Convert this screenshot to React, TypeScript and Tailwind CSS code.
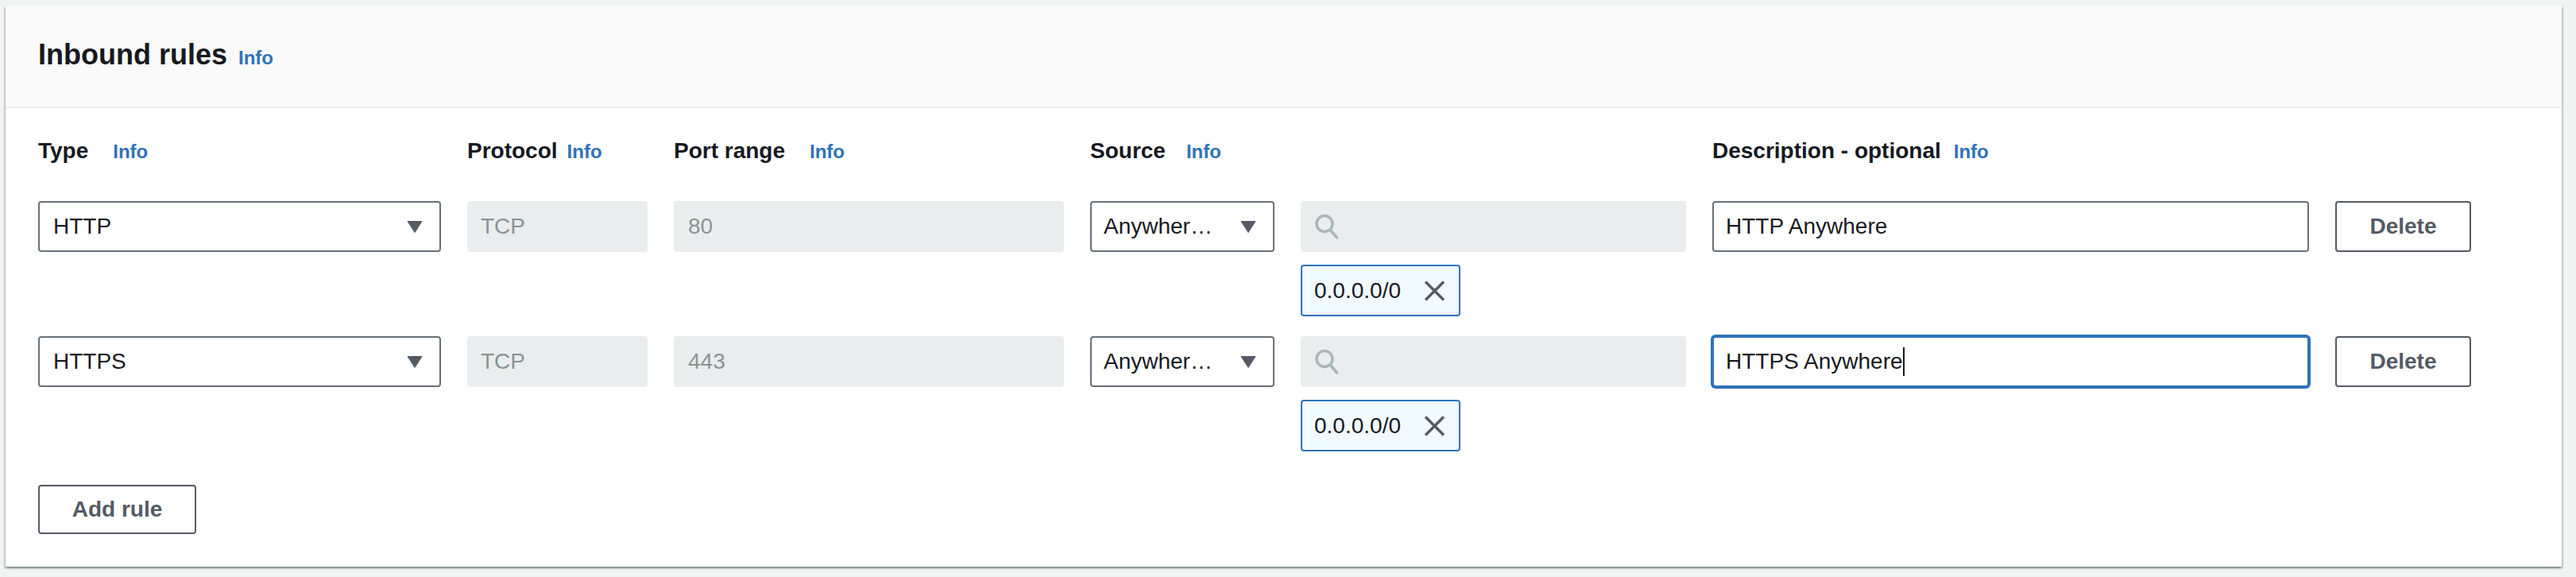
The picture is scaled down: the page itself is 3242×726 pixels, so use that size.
import React from "react";

const Caret = () => (
  <svg width="20" height="15" viewBox="0 0 20 15" aria-hidden="true">
    <path d="M1 0.5H19L10 14.5Z" fill="#545b64" stroke="#545b64" strokeWidth="1" strokeLinejoin="round" />
  </svg>
);

const SearchIcon = () => (
  <svg width="32" height="32" viewBox="0 0 32 32" fill="none" aria-hidden="true">
    <circle cx="13" cy="12.5" r="10" stroke="#aab7b8" strokeWidth="3.5" />
    <path d="M20.5 20.5L28.5 30" stroke="#aab7b8" strokeWidth="3.5" strokeLinecap="round" />
  </svg>
);

const XIcon = () => (
  <svg width="27" height="26" viewBox="0 0 27 26" fill="none" aria-hidden="true">
    <path d="M2 1.5L25 24.5M25 1.5L2 24.5" stroke="#545b64" strokeWidth="3.5" />
  </svg>
);

const Info = ({ className }: { className: string }) => (
  <span className={`text-[24px] font-bold text-[#2f72b8] ${className}`}>Info</span>
);

function Label({ text, infoClass }: { text: string; infoClass: string }) {
  return (
    <div className="flex items-baseline leading-[40px]">
      <span className="text-[28px] font-bold text-[#16191f]">{text}</span>
      <Info className={infoClass} />
    </div>
  );
}

function Row({
  type,
  port,
  desc,
  focused,
}: {
  type: string;
  port: string;
  desc: string;
  focused?: boolean;
}) {
  return (
    <div className="grid grid-cols-[507px_227px_491px_232px_485px_751px_171px] gap-x-[33px] items-start text-[28px] text-[#16191f]">
      <div className="h-[64px] rounded-[4px] border-2 border-[#687078] bg-white flex items-center justify-between pl-[17px] pr-[21px]">
        <span>{type}</span>
        <Caret />
      </div>
      <div className="h-[64px] rounded-[4px] bg-[#eaeded] flex items-center pl-[17px] text-[#879596]">TCP</div>
      <div className="h-[64px] rounded-[4px] bg-[#eaeded] flex items-center pl-[18px] text-[#879596]">{port}</div>
      <div className="h-[64px] rounded-[4px] border-2 border-[#687078] bg-white flex items-center justify-between pl-[15px] pr-[21px]">
        <span>Anywher…</span>
        <Caret />
      </div>
      <div className="flex flex-col items-start gap-[16px]">
        <div className="h-[64px] w-full rounded-[4px] bg-[#eaeded] flex items-center pl-[17px]">
          <SearchIcon />
        </div>
        <div className="h-[65px] w-[201px] rounded-[4px] border-2 border-[#2f72b8] bg-[#f1faff] flex items-center justify-between pl-[15px] pr-[17px]">
          <span>0.0.0.0/0</span>
          <XIcon />
        </div>
      </div>
      {focused ? (
        <div className="h-[64px] rounded-[4px] border-2 border-[#2f72b8] ring-2 ring-[#2f72b8] bg-white flex items-center pl-[15px]">
          <span>{desc}</span>
          <span className="w-[2px] h-[36px] bg-[#16191f]" />
        </div>
      ) : (
        <div className="h-[64px] rounded-[4px] border-2 border-[#687078] bg-white flex items-center pl-[15px]">
          <span>{desc}</span>
        </div>
      )}
      <div className="h-[64px] rounded-[4px] border-2 border-[#545b64] bg-white flex items-center justify-center font-bold text-[#545b64]">
        Delete
      </div>
    </div>
  );
}

export default function App() {
  return (
    <div className="min-h-[726px] bg-[#f2f3f3] pt-[7px] pl-[7px] font-['Liberation_Sans',Arial,sans-serif]">
      <div className="w-[3217px] bg-white shadow-[0_2px_2px_0_rgba(0,28,36,0.3),2px_2px_2px_0_rgba(0,28,36,0.15),-2px_2px_2px_0_rgba(0,28,36,0.15)]">
        <div className="h-[129px] bg-[#fafafa] border-b-2 border-[#eaeded] pt-[40px] pl-[41px]">
          <div className="flex items-baseline leading-[44px]">
            <span className="text-[36px] font-bold text-[#16191f]">Inbound rules</span>
            <Info className="ml-[14px]" />
          </div>
        </div>
        <div className="pt-[34px] pl-[41px] pb-[41px]">
          <div className="grid grid-cols-[507px_227px_491px_232px_485px_751px_171px] gap-x-[33px]">
            <Label text="Type" infoClass="ml-[31px]" />
            <Label text="Protocol" infoClass="ml-[12px]" />
            <Label text="Port range" infoClass="ml-[31px]" />
            <div className="col-span-2">
              <Label text="Source" infoClass="ml-[26px]" />
            </div>
            <Label text="Description - optional" infoClass="ml-[16px]" />
            <div />
          </div>
          <div className="mt-[42px] flex flex-col gap-[25px]">
            <Row type="HTTP" port="80" desc="HTTP Anywhere" />
            <Row type="HTTPS" port="443" desc="HTTPS Anywhere" focused />
          </div>
          <div className="mt-[42px]">
            <div className="h-[62px] w-[199px] rounded-[4px] border-2 border-[#545b64] bg-white flex items-center justify-center text-[28px] font-bold text-[#545b64]">
              Add rule
            </div>
          </div>
        </div>
      </div>
    </div>
  );
}
